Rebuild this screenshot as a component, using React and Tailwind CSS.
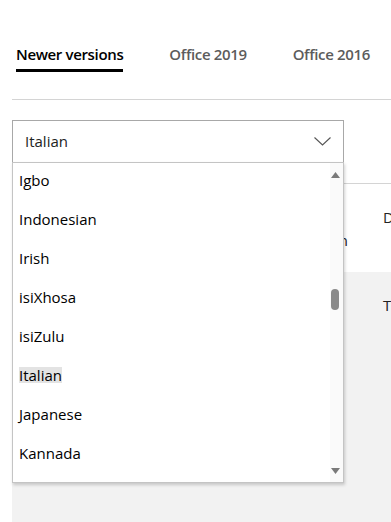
export default function App() {
  const items = ["Igbo", "Indonesian", "Irish", "isiXhosa", "isiZulu", "Italian", "Japanese", "Kannada", "Kazakh"];
  return (
    <div className="relative w-[391px] h-[522px] overflow-hidden bg-white text-black font-['Open_Sans',sans-serif]">
      {/* Tabs */}
      <div className="flex gap-[46px] pl-4 pt-[44px] text-[15px] leading-5 whitespace-nowrap tracking-[-0.35px]">
        <div className="flex flex-col">
          <span className="font-semibold text-black">Newer versions</span>
          <div className="mt-[5px] h-[3px] bg-black" />
        </div>
        <span className="font-semibold text-[#5c5c5c]">Office 2019</span>
        <span className="font-semibold text-[#5c5c5c]">Office 2016</span>
      </div>
      <div className="ml-3 mt-[27px] h-px bg-[#d4d4d4]" />

      {/* Select */}
      <div className="ml-3 mt-5 w-[332px] h-[43px] border border-[#a8a8a8] flex items-center justify-between pl-3 pr-3 text-[15px] text-[#222]">
        <span className="-mt-px">Italian</span>
        <svg width="17" height="9" viewBox="0 0 17 9" fill="none">
          <path d="M0.5 0.5 L8.5 8 L16.5 0.5" stroke="#555" strokeWidth="1.1" />
        </svg>
      </div>

      {/* Table behind */}
      <div className="ml-3 mt-5 border-t border-[#d4d4d4] text-[15px] leading-[23px] text-[#222]">
        <div className="flex h-[88px] pt-[22px] whitespace-nowrap">
          <div className="w-[336px] shrink-0">
            <div className="pl-2">Language</div>
            <div className="text-right">Edition</div>
          </div>
          <div className="pl-[35px]">Download</div>
        </div>
        <div className="flex h-[260px] bg-[#f2f2f2] pt-[22px] whitespace-nowrap">
          <div className="w-[336px] shrink-0" />
          <div className="pl-[35px]">Trial</div>
        </div>
      </div>

      {/* Dropdown list overlay */}
      <div className="absolute left-3 top-[162px] w-[332px] h-[321px] overflow-hidden bg-white border border-[#c4c4c4] shadow-[1px_2px_3px_rgba(0,0,0,0.18)] text-[15px] text-black">
        <div className="-mt-[3px]">
          {items.map((it) => (
            <div key={it} className="h-[39px] flex items-center pl-[6px]">
              <span className={it === "Italian" ? "bg-[#e3e3e3] leading-4" : "leading-4"}>{it}</span>
            </div>
          ))}
        </div>
        <div className="absolute right-0 top-0 bottom-0 w-[13px] bg-[#fafafa]">
          <svg className="absolute left-[1px] top-[9px]" width="9" height="6" viewBox="0 0 9 6">
            <path d="M0 6 L4.5 0 L9 6 Z" fill="#7a7a7a" />
          </svg>
          <div className="absolute left-[1px] top-[126px] w-[8px] h-[21px] rounded-[4px] bg-[#8a8a8a]" />
          <svg className="absolute left-[1px] top-[305px]" width="9" height="6" viewBox="0 0 9 6">
            <path d="M0 0 L4.5 6 L9 0 Z" fill="#7a7a7a" />
          </svg>
        </div>
      </div>
    </div>
  );
}
